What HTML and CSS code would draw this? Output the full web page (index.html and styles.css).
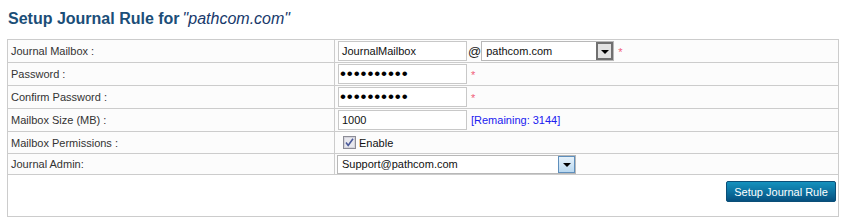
FILE: index.html
```html
<!DOCTYPE html>
<html>
<head>
<meta charset="utf-8">
<link rel="stylesheet" href="styles.css">
</head>
<body>
<h1 class="title">Setup Journal Rule for<em>"pathcom.com"</em></h1>
<table class="form">
  <tr class="r1">
    <td class="lbl">Journal Mailbox :</td>
    <td class="val">
      <div class="line">
        <span class="inp">JournalMailbox</span>
        <span class="at">@</span>
        <span class="sel sel1"><span class="sel-text">pathcom.com</span><span class="sel-btn"><i class="tri"></i></span></span>
        <span class="req">*</span>
      </div>
    </td>
  </tr>
  <tr class="r1">
    <td class="lbl">Password :</td>
    <td class="val"><div class="line"><span class="inp pw">••••••••••</span><span class="req req2">*</span></div></td>
  </tr>
  <tr class="r1">
    <td class="lbl">Confirm Password :</td>
    <td class="val"><div class="line"><span class="inp pw">••••••••••</span><span class="req req2">*</span></div></td>
  </tr>
  <tr class="r1">
    <td class="lbl">Mailbox Size (MB) :</td>
    <td class="val"><div class="line"><span class="inp">1000</span><span class="remain">[Remaining: 3144]</span></div></td>
  </tr>
  <tr class="r2">
    <td class="lbl">Mailbox Permissions :</td>
    <td class="val"><div class="line chk-line"><span class="chk"><svg width="13" height="13" viewBox="0 0 13 13"><rect x="0.5" y="0.5" width="12" height="12" fill="#e8e8ee" stroke="#8c8c96"/><rect x="1.5" y="1.5" width="10" height="10" fill="none" stroke="#d4d4dc"/><path d="M3 6.5 L5.2 9.5 L10 2.8" fill="none" stroke="#4a5a9a" stroke-width="1.6"/></svg></span><span class="enable">Enable</span></div></td>
  </tr>
  <tr class="r3">
    <td class="lbl">Journal Admin:</td>
    <td class="val"><div class="line"><span class="sel sel2"><span class="sel-text">Support@pathcom.com</span><span class="sel-btn"><i class="tri"></i></span></span></div></td>
  </tr>
  <tr class="r4">
    <td colspan="2" class="actions"><div class="btn-wrap"><span class="btn">Setup Journal Rule</span></div></td>
  </tr>
</table>
</body>
</html>
```
FILE: styles.css
```css
html, body {
  margin: 0;
  padding: 0;
  background: #ffffff;
}
body {
  padding: 0 9px 0 7px;
  font-family: "Liberation Sans", Arial, sans-serif;
}
.title {
  margin: 0;
  padding: 10px 0 0 1px;
  height: 39px;
  box-sizing: border-box;
  font-family: "Liberation Sans", Arial, sans-serif;
  font-size: 16px;
  font-weight: bold;
  color: #1b4e78;
  line-height: 18px;
}
.title em {
  font-style: italic;
  font-weight: normal;
  color: #17396b;
  margin-left: 3px;
}
.form {
  width: 832px;
  border-collapse: collapse;
  font-family: "Liberation Sans", Arial, sans-serif;
  font-size: 11px;
  color: #333;
}
.form td {
  border: 1px solid #cccccc;
  padding: 0;
  background: #fcfcfc;
}
.r1 td { height: 22px; }
.r2 td { height: 21px; }
.r3 td { height: 20px; }
.r4 td { height: 41px; background: #ffffff; }
.lbl {
  width: 323px;
  padding-left: 3px !important;
  color: #333;
}
.val {
  padding-left: 3px !important;
}
.line {
  display: flex;
  align-items: center;
}
.inp {
  box-sizing: border-box;
  width: 129px;
  height: 20px;
  border: 1px solid #c8c8c8;
  background: #fff;
  font-size: 11px;
  color: #111;
  padding: 0 3px;
  line-height: 18px;
  display: flex;
  align-items: center;
  overflow: hidden;
}
.inp.pw {
  font-family: "Liberation Sans", Arial, sans-serif;
  font-size: 17px;
  letter-spacing: 0.9px;
  color: #000;
  padding-left: 1px;
}
.at {
  font-size: 13px;
  color: #222;
  margin-left: 1px;
  margin-right: 0;
}
.sel {
  box-sizing: border-box;
  display: flex;
  align-items: center;
  height: 20px;
  border: 1px solid #b8b8b8;
  background: #fff;
  font-size: 11px;
  color: #111;
}
.sel1 { width: 133px; }
.sel2 { width: 239px; height: 19px; margin-left: -1px; }
.sel-text {
  flex: 1;
  padding-left: 4px;
}
.sel-btn {
  box-sizing: border-box;
  width: 17px;
  height: 100%;
  display: flex;
  align-items: center;
  justify-content: center;
}
.sel1 .sel-btn {
  background: #e2e2e2;
  border: 2px solid #707070;
}
.sel2 .sel-btn {
  background: linear-gradient(#e6f2fb, #b9d8f0);
  border: 1px solid #5f8fbc;
}
.tri {
  width: 0;
  height: 0;
  border-left: 4px solid transparent;
  border-right: 4px solid transparent;
  border-top: 4px solid #000;
  margin-top: 2px;
}
.req {
  color: #f0607a;
  font-size: 11px;
  margin-left: 4px;
  position: relative;
  top: 1px;
}
.req2 { margin-left: 4px; }
.remain {
  color: #2020f0;
  font-size: 11px;
  margin-left: 4px;
}
.chk-line { padding-left: 5px; }
.chk { display: flex; }
.enable {
  font-size: 11px;
  color: #111;
  margin-left: 3px;
}
.actions { padding: 0 2px 0 0 !important; vertical-align: top; }
.btn-wrap {
  display: flex;
  justify-content: flex-end;
  padding-top: 6px;
}
.btn {
  box-sizing: border-box;
  width: 110px;
  height: 21px;
  background: linear-gradient(#1592be, #0c6f9e 55%, #06507f);
  border: 1px solid #0b4f78;
  border-radius: 2px;
  color: #ffffff;
  font-size: 11px;
  display: flex;
  align-items: center;
  justify-content: center;
}
```
